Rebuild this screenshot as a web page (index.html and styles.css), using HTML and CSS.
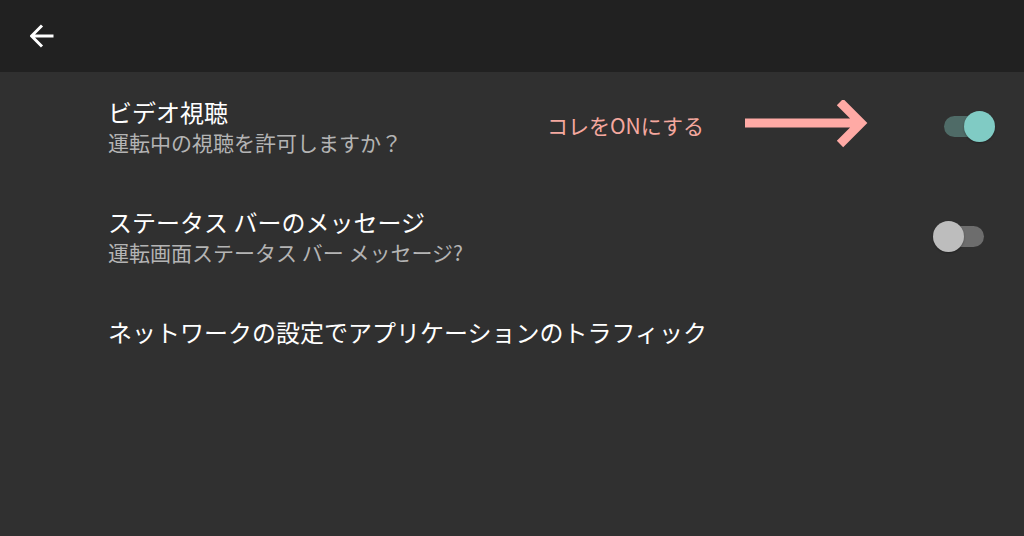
FILE: index.html
```html
<!DOCTYPE html>
<html lang="ja">
<head>
    <meta charset="UTF-8">
    <meta name="viewport" content="width=device-width, initial-scale=1.0">
    <title>設定</title>
    <link rel="stylesheet" href="styles.css">
</head>
<body>
    <div class="toolbar">
        <button class="back-btn" aria-label="戻る">
            <svg width="24" height="24" viewBox="0 0 24 24">
                <path d="M1.5 12H23.5M12 1.5L1.5 12L12 22.5" fill="none" stroke="#fff" stroke-width="3"/>
            </svg>
        </button>
    </div>
    <div class="list">
        <div class="row">
            <div class="texts">
                <div class="title">ビデオ視聴</div>
                <div class="summary">運転中の視聴を許可しますか？</div>
            </div>
            <div class="note">
                <span class="note-text">コレをONにする</span>
                <svg width="126" height="50" viewBox="0 0 126 50">
                    <path d="M0 23H114M95 2L116 23L95 44" fill="none" stroke="#ffaaa5" stroke-width="9"/>
                </svg>
            </div>
            <div class="switch on"><span class="track"></span><span class="thumb"></span></div>
        </div>
        <div class="row">
            <div class="texts">
                <div class="title">ステータス バーのメッセージ</div>
                <div class="summary">運転画面ステータス バー メッセージ?</div>
            </div>
            <div class="switch"><span class="track"></span><span class="thumb"></span></div>
        </div>
        <div class="row">
            <div class="texts">
                <div class="title">ネットワークの設定でアプリケーションのトラフィック</div>
            </div>
        </div>
    </div>
</body>
</html>
```

FILE: styles.css
```css
body {
    font-family: "Noto Sans CJK JP", "Noto Sans", sans-serif;
    margin: 0;
    padding: 0;
    background-color: #303030;
    height: 536px;
    overflow: hidden;
}
.toolbar {
    height: 72px;
    background-color: #212121;
    display: flex;
    align-items: center;
    padding-left: 30px;
}
.back-btn {
    background: none;
    border: none;
    padding: 0;
    width: 24px;
    height: 24px;
    cursor: pointer;
}
.back-btn svg {
    display: block;
}
.row {
    position: relative;
    display: flex;
    align-items: center;
    padding: 24px 29px 26px 108px;
}
.texts {
    flex: 1;
}
.title {
    color: #ffffff;
    font-size: 24px;
    line-height: 32px;
}
.summary {
    color: #b4b4b4;
    font-size: 21px;
    line-height: 28px;
}
.note {
    position: absolute;
    left: 547px;
    top: 28px;
    display: flex;
    align-items: center;
}
.note-text {
    color: #f5a89f;
    font-size: 21px;
    line-height: 46px;
    margin-right: 41px;
}
.note svg {
    display: block;
}
.switch {
    position: relative;
    width: 62px;
    height: 31px;
}
.switch .track {
    position: absolute;
    left: 11px;
    top: 5px;
    width: 40px;
    height: 21px;
    border-radius: 11px;
    background-color: #6d6d6d;
}
.switch .thumb {
    position: absolute;
    left: 0;
    top: 0;
    width: 31px;
    height: 31px;
    border-radius: 50%;
    background-color: #bdbdbd;
    box-shadow: 0 1px 2px rgba(0, 0, 0, 0.3);
}
.switch.on .track {
    background-color: #4f6b67;
}
.switch.on .thumb {
    left: 31px;
    background-color: #80cbc4;
}
```
